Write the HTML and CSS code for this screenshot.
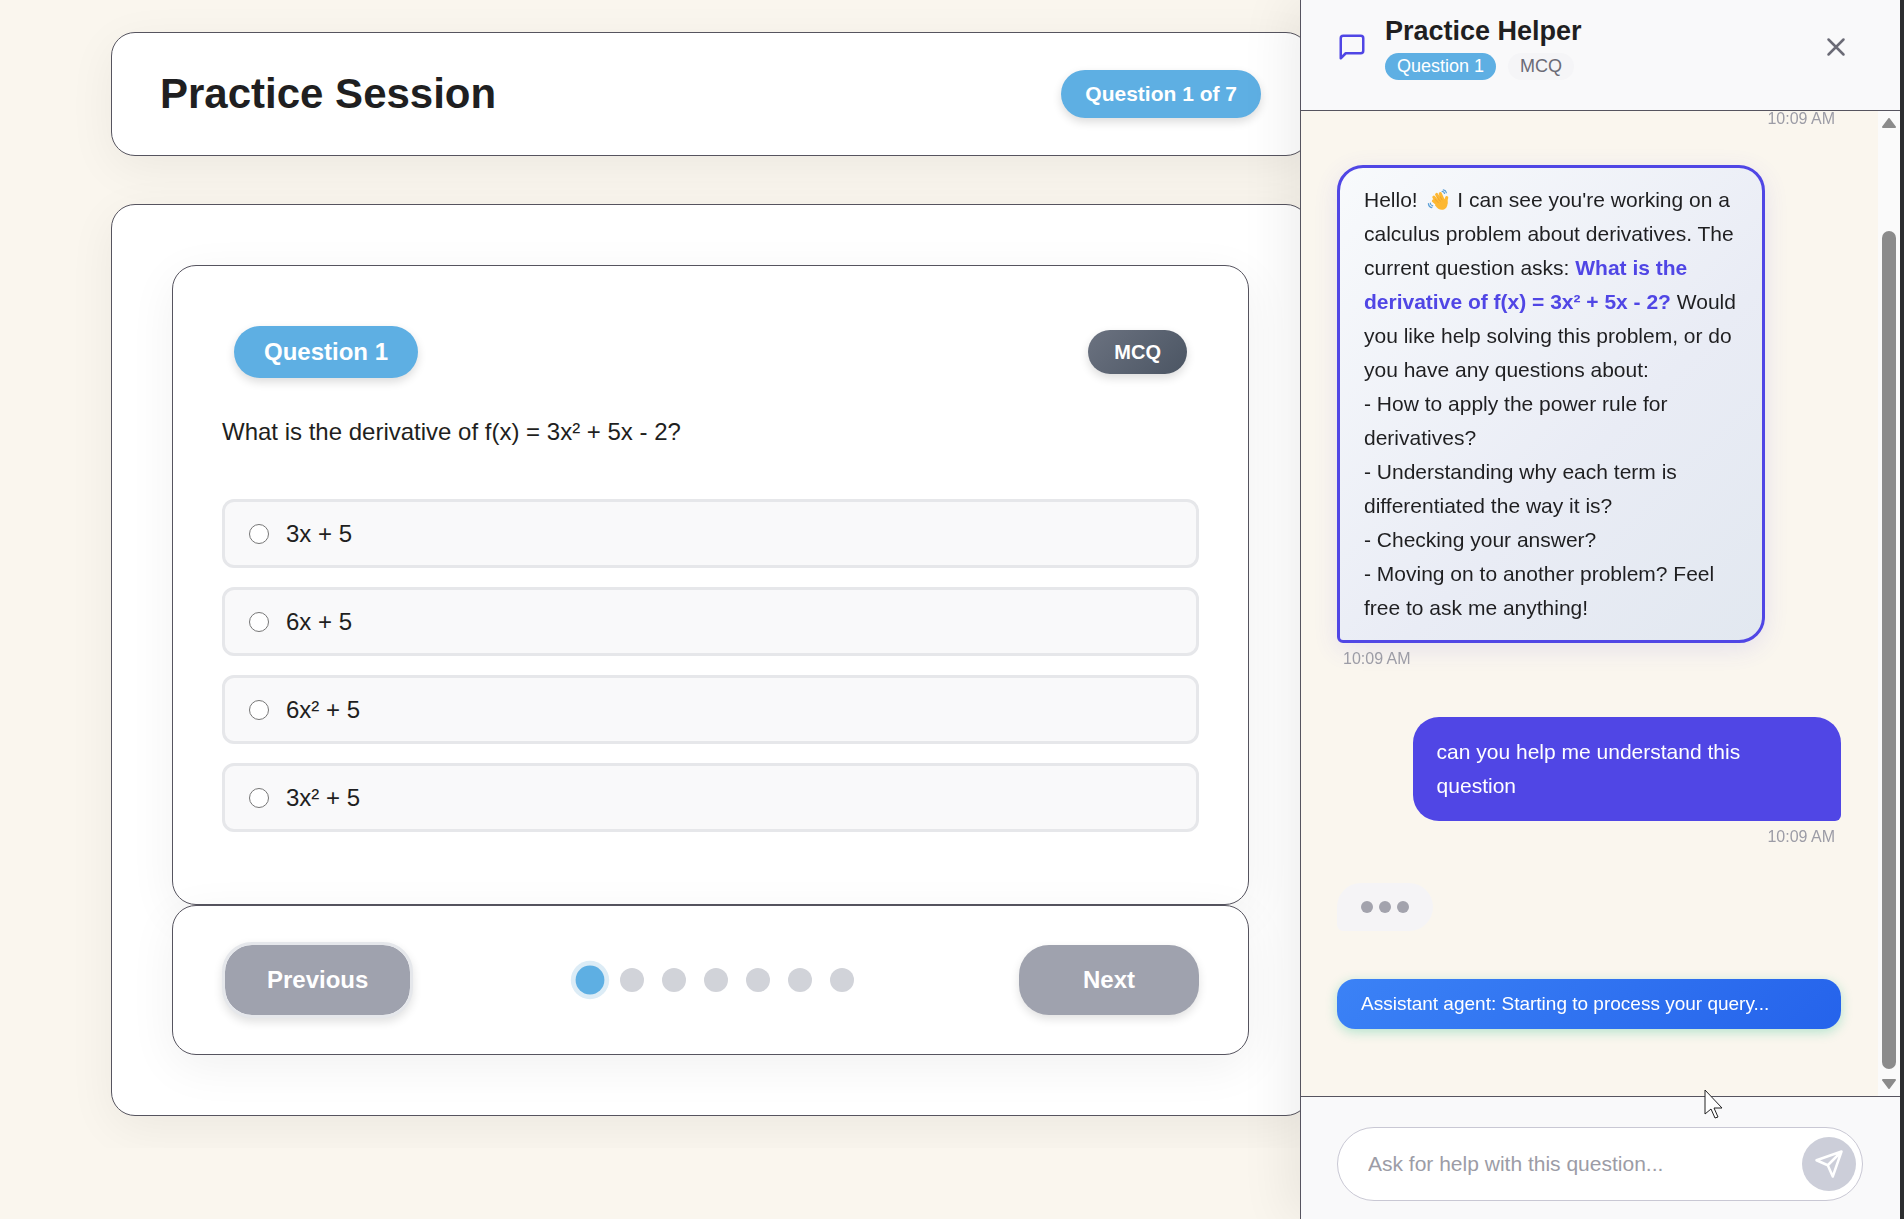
FILE: index.html
```
<!DOCTYPE html>
<html lang="en">

<head>
    <meta charset="UTF-8">
    <meta name="viewport" content="width=device-width, initial-scale=1.0">
    <title>Practice Session</title>
    <link rel="stylesheet" href="styles.css">
</head>

<body>
    <main class="practice">
        <header class="card session-header">
            <h1>Practice Session</h1>
            <span class="progress-pill">Question 1 of 7</span>
        </header>

        <section class="card session-body">
            <div class="card question-card">
                <div class="question-head">
                    <span class="question-number">Question 1</span>
                    <span class="question-type">MCQ</span>
                </div>
                <p class="question-text">What is the derivative of f(x) = 3x² + 5x - 2?</p>
                <div class="options">
                    <label class="option" for="opt1">
                        <input type="radio" name="answer" id="opt1">
                        <span>3x + 5</span>
                    </label>
                    <label class="option" for="opt2">
                        <input type="radio" name="answer" id="opt2">
                        <span>6x + 5</span>
                    </label>
                    <label class="option" for="opt3">
                        <input type="radio" name="answer" id="opt3">
                        <span>6x² + 5</span>
                    </label>
                    <label class="option" for="opt4">
                        <input type="radio" name="answer" id="opt4">
                        <span>3x² + 5</span>
                    </label>
                </div>
            </div>

            <nav class="card question-nav">
                <button type="button" class="nav-btn prev">Previous</button>
                <div class="dots">
                    <span class="dot active"></span>
                    <span class="dot"></span>
                    <span class="dot"></span>
                    <span class="dot"></span>
                    <span class="dot"></span>
                    <span class="dot"></span>
                    <span class="dot"></span>
                </div>
                <button type="button" class="nav-btn next">Next</button>
            </nav>
        </section>
    </main>

    <aside class="helper">
        <header class="helper-header">
            <svg class="helper-icon" viewBox="0 0 24 24" fill="none" stroke="currentColor" stroke-width="2" stroke-linecap="round" stroke-linejoin="round">
                <path d="M21 15a2 2 0 0 1-2 2H7l-4 4V5a2 2 0 0 1 2-2h14a2 2 0 0 1 2 2z"/>
            </svg>
            <div class="helper-title">
                <h2>Practice Helper</h2>
                <div class="tags">
                    <span class="tag tag-blue">Question 1</span>
                    <span class="tag">MCQ</span>
                </div>
            </div>
            <button type="button" class="close-btn" aria-label="Close">
                <svg viewBox="0 0 24 24" fill="none" stroke="currentColor" stroke-width="2" stroke-linecap="round">
                    <path d="M18 6L6 18M6 6l12 12"/>
                </svg>
            </button>
        </header>

        <div class="chat">
            <div class="messages">
                <div class="message user">
                    <time>10:09 AM</time>
                </div>

                <div class="message assistant">
                    <div class="bubble">
                        Hello! <svg class="wave" viewBox="0 0 24 24" role="img" aria-label="waving hand">
                            <g fill="none" stroke="#fdb833" stroke-width="3.400" stroke-linecap="round">
                                <path d="M7 13l6 5M7.500 9l6 7M10.500 6l5 8M14.500 5l3.500 8"/>
                                <path d="M21.500 9.500c-1 2-.5 4-.8 6"/>
                            </g>
                            <path fill="#fdb833" d="M10 12.500l6.500-3.500 5.500 4c.8 3.500.2 7-3 9-3.500 1.800-7.500 0-10-4z"/>
                            <path fill="none" stroke="#e8962a" stroke-width=".7" stroke-linecap="round" d="M8.800 11.200l3.400 3.600M10.800 8.800l3.600 4.400M13.700 7.400l2.700 4.400"/>
                            <path fill="none" stroke="#5c9fd6" stroke-width="1.300" stroke-linecap="round" d="M16.500 2.600c1.400.2 2.300 1 2.700 2.300M17.800 .9c1.900.3 3 1.400 3.400 3.200M3.600 15.500c.2 1.500 1.100 2.500 2.600 2.900M1.500 16c.2 2.300 1.600 3.800 3.800 4.300"/>
                        </svg> I can see you're working on a calculus problem about derivatives. The current question asks: <strong>What is the derivative of f(x) = 3x² + 5x - 2?</strong> Would you like help solving this problem, or do you have any questions about:<br>
                        - How to apply the power rule for derivatives?<br>
                        - Understanding why each term is differentiated the way it is?<br>
                        - Checking your answer?<br>
                        - Moving on to another problem? Feel free to ask me anything!
                    </div>
                    <time>10:09 AM</time>
                </div>

                <div class="message user">
                    <div class="bubble">can you help me understand this question</div>
                    <time>10:09 AM</time>
                </div>

                <div class="message assistant">
                    <div class="typing">
                        <span></span>
                        <span></span>
                        <span></span>
                    </div>
                </div>

                <div class="status">Assistant agent: Starting to process your query...</div>
            </div>

            <div class="scrollbar">
                <svg viewBox="0 0 14 10"><path d="M7 1l6 8H1z"/></svg>
                <div class="track">
                    <div class="thumb"></div>
                </div>
                <svg viewBox="0 0 14 10"><path d="M7 9L1 1h12z"/></svg>
            </div>
        </div>

        <footer class="helper-footer">
            <form class="ask">
                <input type="text" placeholder="Ask for help with this question..." aria-label="Ask for help with this question">
                <button type="button" class="send-btn" aria-label="Send">
                    <svg viewBox="0 0 24 24" fill="none" stroke="currentColor" stroke-width="2" stroke-linecap="round" stroke-linejoin="round">
                        <path d="M22 2L11 13M22 2l-7 20-4-9-9-4z"/>
                    </svg>
                </button>
            </form>
        </footer>

        <svg class="cursor" viewBox="0 0 20 30">
            <path d="M1 1v24l6-5 4 9 3-1-4-9h8z" fill="#fff" stroke="#222"/>
        </svg>
    </aside>
</body>

</html>
```
FILE: styles.css
```
* {
    box-sizing: border-box;
}

body {
    margin: 0;
    background-color: #faf6ee;
    color: #1f1f21;
    font-family: Arial, "Liberation Sans", sans-serif;
}

h1,
h2,
p {
    margin: 0;
}

button,
input {
    font-family: inherit;
}

button {
    border: none;
    cursor: pointer;
}

/* practice area, runs a little under the helper panel */
.practice {
    margin: 0 594px 0 111px;
    padding: 32px 0;
}

.card {
    background-color: #fff;
    border: 1px solid #56545f;
    border-radius: 24px;
    box-shadow: 0 12px 48px rgba(0, 0, 0, 0.06);
}

.session-header {
    display: flex;
    align-items: center;
    justify-content: space-between;
    padding: 36px 48px;
    margin-bottom: 48px;
}

.session-header h1 {
    font-size: 42px;
    line-height: 50px;
}

.progress-pill,
.question-number,
.question-type {
    color: #fff;
    font-weight: bold;
    border-radius: 30px;
    box-shadow: 0 4px 10px rgba(0, 0, 0, 0.14);
}

.progress-pill {
    background-color: #5eafe3;
    font-size: 21px;
    line-height: 24px;
    padding: 12px 24px;
}

.session-body {
    padding: 60px;
}

.question-card {
    padding: 60px 49px 72px;
}

.question-head {
    display: flex;
    align-items: center;
    justify-content: space-between;
    padding: 0 12px;
    margin-bottom: 35px;
}

.question-number {
    background-color: #5eafe3;
    font-size: 24px;
    line-height: 28px;
    padding: 12px 30px;
}

.question-type {
    background: linear-gradient(135deg, #6b7280, #4b5563);
    font-size: 20px;
    line-height: 24px;
    padding: 10px 26px;
}

.question-text {
    font-size: 24px;
    line-height: 38px;
    margin-bottom: 48px;
}

.options {
    display: flex;
    flex-direction: column;
    gap: 19px;
}

.option {
    display: flex;
    align-items: center;
    gap: 17px;
    padding: 15px 24px;
    background-color: #f9f9fa;
    border: 3px solid #e6e7ea;
    border-radius: 12px;
    font-size: 24px;
    line-height: 33px;
    cursor: pointer;
}

.option input {
    width: 20px;
    height: 20px;
    margin: 0;
}

.question-nav {
    display: flex;
    align-items: center;
    justify-content: space-between;
    padding: 36px 49px;
}

.nav-btn {
    background-color: #9fa2ae;
    background-clip: padding-box;
    color: #fff;
    font-size: 24px;
    font-weight: bold;
    line-height: 28px;
    padding: 21px 42px;
    border-radius: 30px;
    box-shadow: 0 4px 10px rgba(0, 0, 0, 0.12);
}

.prev {
    border: 3px solid #e5e7eb;
}

.next {
    min-width: 180px;
}

.dots {
    display: flex;
    gap: 18px;
}

.dot {
    width: 24px;
    height: 24px;
    border-radius: 50%;
    background-color: #d1d3d9;
}

.dot.active {
    background-color: #5eafe3;
    transform: scale(1.2);
    box-shadow: 0 0 0 4px #dcecf6;
}

/* helper panel */
.helper {
    position: fixed;
    top: 0;
    right: 0;
    bottom: 0;
    width: 604px;
    display: flex;
    flex-direction: column;
    background-color: #faf6ee;
    border-left: 1px solid #56545f;
    border-right: 4px solid #2c2d2f;
    box-shadow: -12px 0 48px rgba(0, 0, 0, 0.07);
}

.helper-header {
    display: flex;
    align-items: center;
    gap: 18px;
    padding: 14px 49px 30px 36px;
    background-color: #f9f9fa;
    border-bottom: 1px solid #56545f;
}

.helper-icon {
    width: 30px;
    height: 30px;
    color: #5046e5;
}

.helper-title {
    flex: 1;
}

.helper-title h2 {
    font-size: 27px;
    line-height: 34px;
    margin-bottom: 5px;
}

.tags {
    display: flex;
    gap: 12px;
}

.tag {
    padding: 3px 12px;
    border-radius: 14px;
    background-color: #f5f5f7;
    color: #6b6b76;
    font-size: 18px;
    line-height: 21px;
}

.tag-blue {
    background-color: #5eafe3;
    color: #fff;
}

.close-btn {
    width: 30px;
    height: 30px;
    padding: 0;
    background: none;
    color: #6b6b76;
}

.close-btn svg {
    display: block;
}

.chat {
    flex: 1;
    min-height: 0;
    display: flex;
}

.messages {
    flex: 1;
    display: flex;
    flex-direction: column;
    justify-content: flex-end;
    padding: 0 37px 67px 36px;
    overflow: hidden;
}

.message {
    display: flex;
    flex-direction: column;
    align-items: flex-start;
    margin-bottom: 36px;
}

.message.user {
    align-items: flex-end;
}

.message.assistant {
    margin-bottom: 48px;
}

.bubble {
    width: 85%;
    font-size: 21px;
    line-height: 34px;
    border-radius: 26px;
}

.assistant .bubble {
    padding: 15px 22px 15px 24px;
    border: 3px solid #5046e5;
    border-bottom-left-radius: 6px;
    background: linear-gradient(135deg, #f8fafc, #e9ecf5 60%, #e2e8f0);
    box-shadow: 0 6px 24px rgba(80, 70, 229, 0.12);
}

.assistant strong {
    color: #5046e5;
}

.user .bubble {
    padding: 18px 24px;
    border-bottom-right-radius: 6px;
    background-color: #5046e5;
    color: #fff;
}

.wave {
    width: 22px;
    height: 24px;
    margin: 0 3px;
    vertical-align: -5px;
}

time {
    margin: 6px 6px 0;
    color: #9c9ca6;
    font-size: 16px;
    line-height: 20px;
}

.typing {
    display: flex;
    gap: 6px;
    padding: 18px 24px;
    border-radius: 24px;
    border-bottom-left-radius: 6px;
    background-color: #f5f4f6;
}

.typing span {
    width: 12px;
    height: 12px;
    border-radius: 50%;
    background-color: #a3a3ad;
}

.status {
    padding: 13px 24px;
    border-radius: 18px;
    background: linear-gradient(135deg, #3b82f6, #2563eb);
    box-shadow: 0 3px 12px rgba(16, 185, 129, 0.3);
    color: #fff;
    font-size: 19px;
    line-height: 24px;
}

.scrollbar {
    display: flex;
    flex-direction: column;
    align-items: center;
    gap: 10px;
    width: 22px;
    padding: 7px 4px;
    background-color: #fafafa;
}

.scrollbar svg {
    width: 14px;
    height: 10px;
    fill: #8b8b8b;
    stroke: #8b8b8b;
    stroke-width: 2;
    stroke-linejoin: round;
}

.track {
    flex: 1;
    display: flex;
    flex-direction: column;
    justify-content: flex-end;
    width: 14px;
}

.thumb {
    height: 90%;
    border-radius: 7px;
    background-color: #8b8b8b;
}

.helper-footer {
    padding: 30px 37px 18px 36px;
    background-color: #f9f9fa;
    border-top: 1px solid #56545f;
}

.ask {
    display: flex;
    align-items: center;
    padding: 9px 6px 9px 30px;
    background-color: #fff;
    border: 1px solid #c9c8d4;
    border-radius: 37px;
}

.ask input {
    flex: 1;
    min-width: 0;
    padding: 0;
    border: none;
    outline: none;
    background: none;
    font-size: 21px;
    line-height: 34px;
}

.ask input::placeholder {
    color: #9c9ca6;
}

.send-btn {
    display: flex;
    align-items: center;
    justify-content: center;
    width: 54px;
    height: 54px;
    padding: 0;
    border-radius: 50%;
    background-color: #ccced9;
    color: #fff;
}

.send-btn svg {
    width: 30px;
    height: 30px;
}

/* mouse pointer over the panel */
.cursor {
    position: absolute;
    right: 176px;
    bottom: 100px;
    width: 20px;
    height: 30px;
}
```
